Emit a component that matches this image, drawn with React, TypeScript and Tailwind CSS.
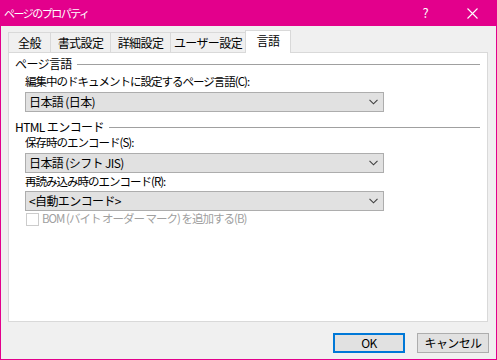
import React from "react";

const font = {
  fontFamily: '"Noto Sans CJK JP", "Noto Sans", sans-serif',
};

function Chevron() {
  return (
    <svg width="9" height="6" viewBox="0 0 9 6" className="mr-[5px]">
      <path d="M0.5 0.8 L4.5 4.8 L8.5 0.8" fill="none" stroke="#404040" strokeWidth="1.1" />
    </svg>
  );
}

function Select({ value }: { value: string }) {
  return (
    <div className="ml-[10px] flex h-[20px] w-[359px] items-center justify-between border border-[#adadad] bg-[#e1e1e1] pl-[3px] text-[12px] leading-none text-black">
      <span>{value}</span>
      <Chevron />
    </div>
  );
}

function Heading({ text }: { text: string }) {
  return (
    <div className="flex h-[16px] items-center text-[12px] leading-none text-black">
      <span>{text}</span>
      <div className="ml-[5px] h-px flex-1 bg-[#a0a0a0]" />
    </div>
  );
}

function Label({ text }: { text: string }) {
  return (
    <div className="ml-[10px] flex h-[16px] items-center text-[11.5px] leading-none tracking-[-1px] text-black">
      {text}
    </div>
  );
}

const tabs = [
  { name: "全般", w: "w-[43px]" },
  { name: "書式設定", w: "w-[61px]" },
  { name: "詳細設定", w: "w-[61px]" },
  { name: "ユーザー設定", w: "w-[76px]" },
];

export default function App() {
  return (
    <div style={font} className="flex h-[360px] w-[497px] flex-col bg-[#e3008c] tracking-[-0.6px]">
      <div className="flex h-[26px] items-center pl-[4px] text-white">
        <span className="flex-1 text-[11px] tracking-[-1.5px]">ページのプロパティ</span>
        <span className="mr-[39px] text-[13px]">?</span>
        <svg width="11" height="11" viewBox="0 0 11 11" className="mr-[19px]">
          <path d="M0.5 0.5 L10.5 10.5 M10.5 0.5 L0.5 10.5" stroke="white" strokeWidth="1.1" />
        </svg>
      </div>
      <div className="mx-px mb-px flex flex-1 flex-col bg-[#f0f0f0] px-[7px]">
        <div className="flex h-[26px] items-end pt-[5px]">
          {tabs.map((t, i) => (
            <div
              key={t.name}
              className={`${t.w} ${i > 0 ? "-ml-px" : ""} flex h-[20px] items-center justify-center border border-b-0 border-[#d9d9d9] bg-[#f0f0f0] text-[12px] leading-none text-black`}
            >
              {t.name}
            </div>
          ))}
          <div className="relative z-10 -mb-px -ml-px flex h-[23px] w-[46px] items-center justify-center border border-b-0 border-[#d9d9d9] bg-white pb-[2px] text-[12px] leading-none text-black">
            言語
          </div>
        </div>
        <div className="flex h-[270px] w-[480px] flex-col border border-[#d9d9d9] bg-white pl-[6px] pr-[7px] pt-[3px]">
          <Heading text="ページ言語" />
          <div className="mt-[2px]">
            <Label text="編集中のドキュメントに設定するページ言語(C):" />
          </div>
          <div className="mt-[2px]">
            <Select value="日本語 (日本)" />
          </div>
          <div className="mt-[7px]">
            <Heading text="HTML エンコード" />
          </div>
          <Label text="保存時のエンコード(S):" />
          <div className="mt-[2px]">
            <Select value="日本語 (シフト JIS)" />
          </div>
          <div className="mt-[1px]">
            <Label text="再読み込み時のエンコード(R):" />
          </div>
          <div className="mt-[1px]">
            <Select value="<自動エンコード>" />
          </div>
          <div className="ml-[11px] flex h-[16px] items-center text-[11.5px] leading-none tracking-[-1px] text-[#a0a0a0]">
            <div className="mr-[3px] h-[13px] w-[13px] border border-[#cccccc] bg-white" />
            <span>BOM (バイト オーダー マーク) を追加する(B)</span>
          </div>
        </div>
        <div className="mt-[11px] flex justify-end gap-[12px]">
          <div className="flex h-[20px] w-[72px] items-center justify-center border-2 border-[#0078d7] bg-[#e1e1e1] text-[12px] leading-none text-black">
            OK
          </div>
          <div className="flex h-[20px] w-[72px] items-center justify-center border border-[#adadad] bg-[#e1e1e1] text-[12px] leading-none text-black">
            キャンセル
          </div>
        </div>
      </div>
    </div>
  );
}
